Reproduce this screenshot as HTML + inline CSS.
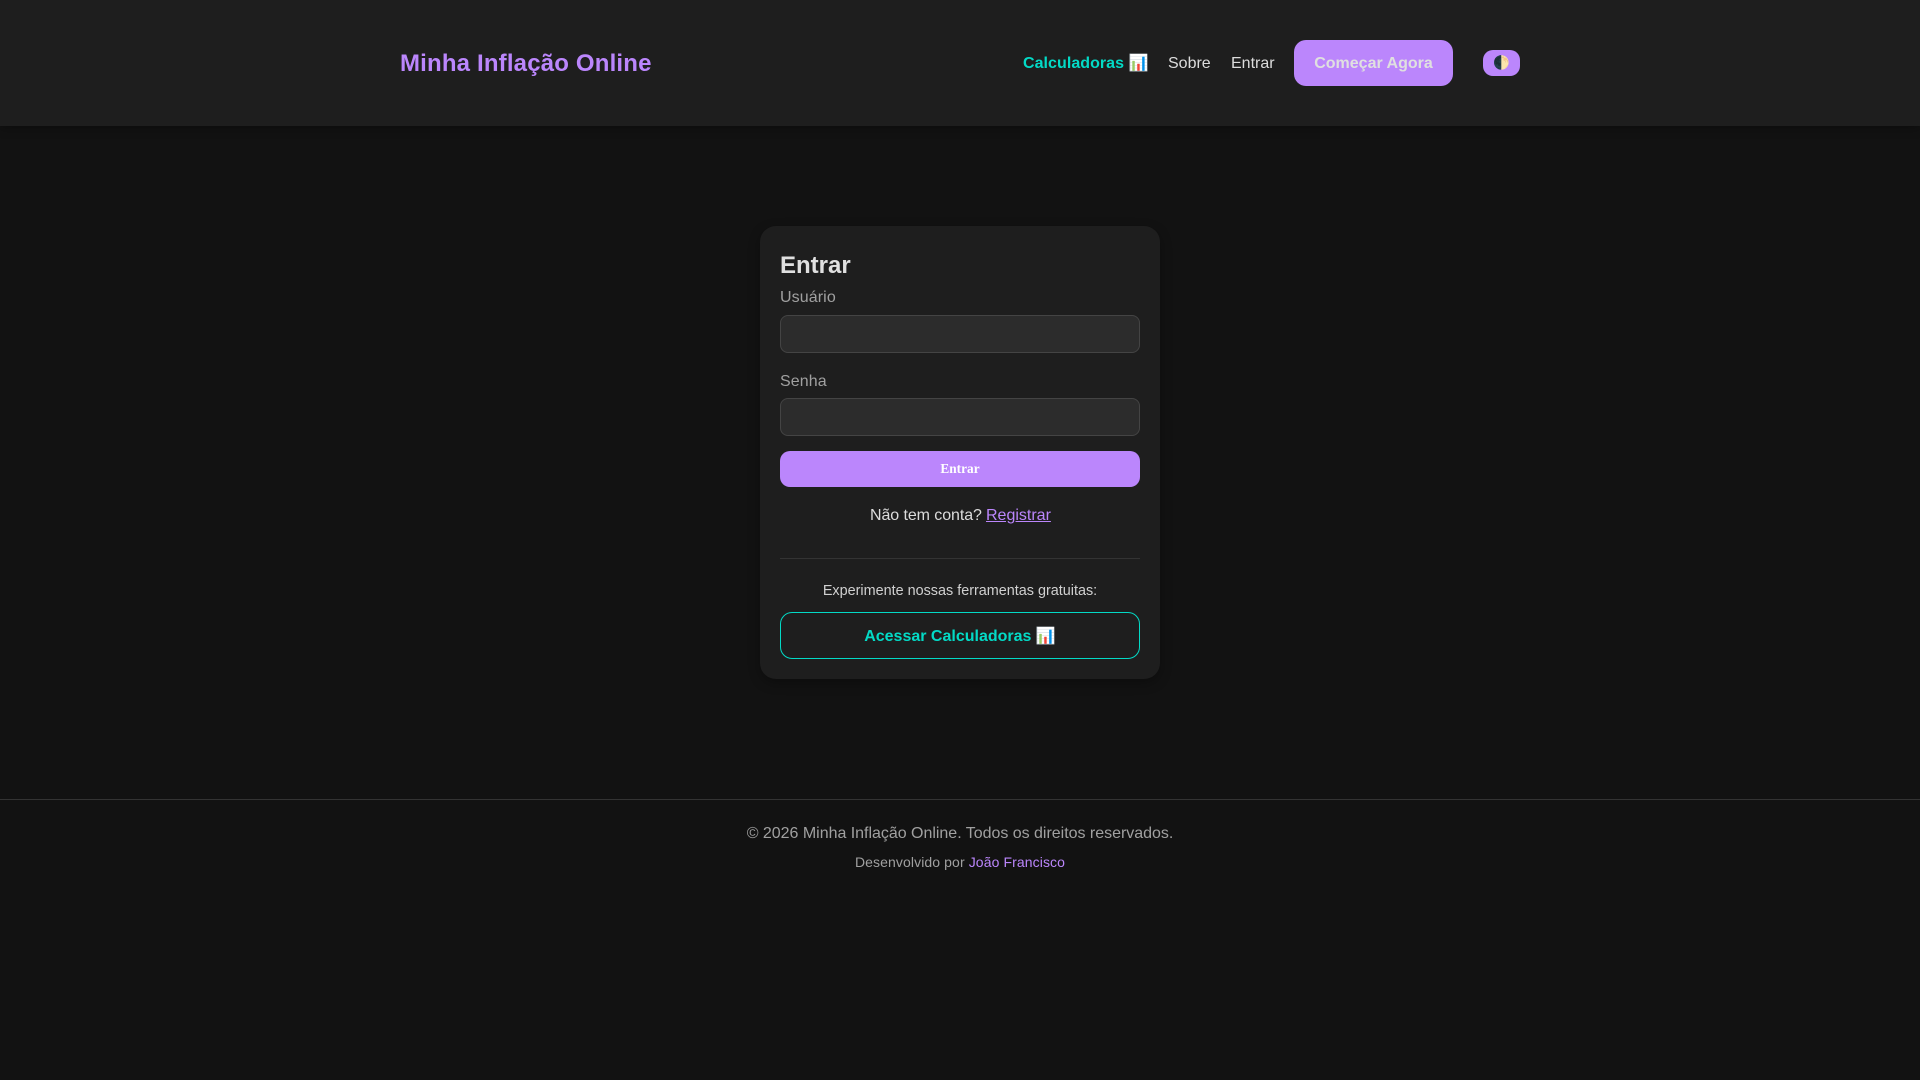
<!DOCTYPE html>
<html lang="pt-BR"><head><meta charset="utf-8"><title>Entrar - Minha Inflação Online</title>
<style>
*{box-sizing:border-box}
html,body{margin:0;padding:0;width:1920px;height:1080px;overflow:hidden;background:#121212;font-family:"Liberation Sans",Arial,sans-serif;color:#e0e0e0}
.a{position:absolute;white-space:nowrap}
header{position:absolute;left:0;top:0;width:1920px;height:126px;background:#1e1e1e;box-shadow:0 2px 10px rgba(0,0,0,.3)}
.logo{left:400px;top:49px;font-size:24px;line-height:29px;font-weight:700;color:#bb86fc;letter-spacing:.17px}
.nav{top:54px;font-size:16px;line-height:19px;color:#dcdcdc}
.cta{left:1294px;top:40px;width:159px;height:46px;background:#bb86fc;border-radius:12px;color:#e0e0e0;font-weight:700;font-size:16px;line-height:47px;text-align:center}
.toggle{left:1483px;top:50px;width:37px;height:26px;background:#bb86fc;border-radius:10px;font-size:13.3333px;line-height:26px;text-align:center}
.card{left:760px;top:226px;width:400px;height:453px;background:#1e1e1e;border-radius:16px;box-shadow:0 4px 12px rgba(0,0,0,.3)}
.input{left:780px;width:360px;height:38px;background:#2c2c2c;border:1px solid #444;border-radius:8px}
.label{left:780px;font-size:16px;line-height:18px;color:#a0a0a0;letter-spacing:.1px}
.btn{left:780px;top:451px;width:360px;height:36px;background:#bb86fc;border-radius:10px;color:#fff;font:700 13.3333px/36px "Liberation Serif",serif;text-align:center}
.c{left:0;width:1920px;text-align:center}
</style></head><body>
<header>
<div class="a logo">Minha Inflação Online</div>
<div class="a nav" style="left:1023px;font-weight:700;color:#03dac6;letter-spacing:.05px">Calculadoras 📊</div>
<div class="a nav" style="left:1168px">Sobre</div>
<div class="a nav" style="left:1231px">Entrar</div>
<div class="a cta">Começar Agora</div>
<div class="a toggle">🌓</div>
</header>
<div class="a card"></div>
<div class="a" style="left:780px;top:252px;font-size:24px;line-height:28px;font-weight:700;color:#e0e0e0">Entrar</div>
<div class="a label" style="top:289px">Usuário</div>
<div class="a input" style="top:315px"></div>
<div class="a label" style="top:373px">Senha</div>
<div class="a input" style="top:398px"></div>
<div class="a btn">Entrar</div>
<div class="a" style="left:870px;top:507px;font-size:16px;line-height:18px;color:#dcdcdc;letter-spacing:-.08px">Não tem conta?</div>
<div class="a" style="left:986px;top:507px;font-size:16px;line-height:18px;color:#bb86fc;text-decoration:underline">Registrar</div>
<div class="a" style="left:780px;top:558px;width:360px;height:1px;background:#333"></div>
<div class="a c" style="top:583px;font-size:14.4px;line-height:17px;color:#d0d0d0">Experimente nossas ferramentas gratuitas:</div>
<div class="a" style="left:780px;top:612px;width:360px;height:47px;border:1px solid #03dac6;border-radius:12px;color:#03dac6;font-weight:700;font-size:16px;line-height:47px;text-align:center">Acessar Calculadoras 📊</div>
<div class="a" style="left:0;top:799px;width:1920px;height:1px;background:#333"></div>
<div class="a c" style="top:825px;font-size:16px;line-height:18px;color:#a0a0a0;letter-spacing:-.02px">© 2026 Minha Inflação Online. Todos os direitos reservados.</div>
<div class="a c" style="top:854px;font-size:14px;line-height:16px;color:#a0a0a0;letter-spacing:.1px">Desenvolvido por <span style="color:#bb86fc">João Francisco</span></div>
</body></html>
